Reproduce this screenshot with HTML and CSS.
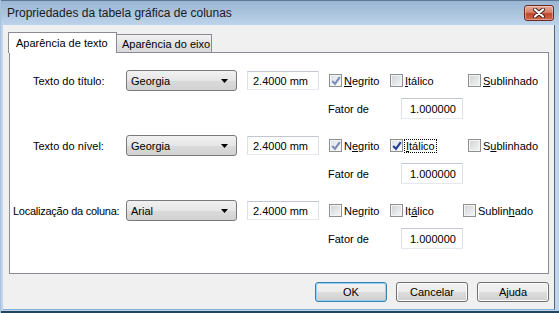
FILE: index.html
```html
<!DOCTYPE html>
<html lang="pt">
<head>
    <meta charset="UTF-8">
    <title>Propriedades da tabela gráfica de colunas</title>
    <link rel="stylesheet" href="styles.css">
</head>
<body>
    <div class="window">
        <div class="titlebar">
            <span class="title">Propriedades da tabela gráfica de colunas</span>
            <button class="close-btn">
                <svg width="14" height="10" viewBox="0 0 14 10">
                    <path d="M3 1.5 L11 8.5 M11 1.5 L3 8.5" stroke="#3b2320" stroke-width="4" stroke-linecap="round"/>
                    <path d="M3 1.5 L11 8.5 M11 1.5 L3 8.5" stroke="#ffffff" stroke-width="2.2" stroke-linecap="round"/>
                </svg>
            </button>
        </div>

        <div class="client">
            <div class="tabs">
                <div class="tab active">Aparência de texto</div>
                <div class="tab">Aparência do eixo</div>
            </div>

            <div class="panel">
                <!-- Texto do título -->
                <div class="group">
                    <div class="row">
                        <label class="field-label">Texto do título:</label>
                        <div class="combo">
                            <span>Georgia</span>
                            <svg class="arrow" width="7" height="4" viewBox="0 0 7 4"><path d="M0 0 H7 L3.5 4 Z" fill="#000"/></svg>
                        </div>
                        <div class="textbox size-box">2.4000 mm</div>
                        <div class="checks">
                            <span class="check check-bold"><span class="cb checked"><svg width="10" height="10" viewBox="0 0 10 10"><path d="M1.2 5 L4 7.8 L8.8 1.2" fill="none" stroke="#7d8fb8" stroke-width="2.2"/></svg></span><span class="check-text"><u>N</u>egrito</span></span>
                            <span class="check check-italic"><span class="cb"></span><span class="check-text"><u>I</u>tálico</span></span>
                            <span class="check"><span class="cb"></span><span class="check-text"><u>S</u>ublinhado</span></span>
                        </div>
                    </div>
                    <div class="row factor-row">
                        <span class="factor-label">Fator de</span>
                        <div class="textbox factor-box">1.000000</div>
                    </div>
                </div>

                <!-- Texto do nível -->
                <div class="group">
                    <div class="row">
                        <label class="field-label">Texto do nível:</label>
                        <div class="combo">
                            <span>Georgia</span>
                            <svg class="arrow" width="7" height="4" viewBox="0 0 7 4"><path d="M0 0 H7 L3.5 4 Z" fill="#000"/></svg>
                        </div>
                        <div class="textbox size-box">2.4000 mm</div>
                        <div class="checks">
                            <span class="check check-bold"><span class="cb checked"><svg width="10" height="10" viewBox="0 0 10 10"><path d="M1.2 5 L4 7.8 L8.8 1.2" fill="none" stroke="#7d8fb8" stroke-width="2.2"/></svg></span><span class="check-text">N<u>e</u>grito</span></span>
                            <span class="check check-italic"><span class="cb checked"><svg width="10" height="10" viewBox="0 0 10 10"><path d="M1.2 5 L4 7.8 L8.8 1.2" fill="none" stroke="#21409a" stroke-width="2.2"/></svg></span><span class="check-text focus"><u>I</u>tálico</span></span>
                            <span class="check"><span class="cb"></span><span class="check-text">S<u>u</u>blinhado</span></span>
                        </div>
                    </div>
                    <div class="row factor-row">
                        <span class="factor-label">Fator de</span>
                        <div class="textbox factor-box">1.000000</div>
                    </div>
                </div>

                <!-- Localização da coluna -->
                <div class="group">
                    <div class="row">
                        <label class="field-label wide">Localização da coluna:</label>
                        <div class="combo">
                            <span>Arial</span>
                            <svg class="arrow" width="7" height="4" viewBox="0 0 7 4"><path d="M0 0 H7 L3.5 4 Z" fill="#000"/></svg>
                        </div>
                        <div class="textbox size-box">2.4000 mm</div>
                        <div class="checks">
                            <span class="check check-bold"><span class="cb"></span><span class="check-text">Ne<u>g</u>rito</span></span>
                            <span class="check check-italic short"><span class="cb"></span><span class="check-text">It<u>á</u>lico</span></span>
                            <span class="check"><span class="cb"></span><span class="check-text">Sublin<u>h</u>ado</span></span>
                        </div>
                    </div>
                    <div class="row factor-row">
                        <span class="factor-label">Fator de</span>
                        <div class="textbox factor-box">1.000000</div>
                    </div>
                </div>
            </div>

            <div class="buttons">
                <button class="btn default">OK</button>
                <button class="btn">Cancelar</button>
                <button class="btn">Ajuda</button>
            </div>
        </div>
    </div>
</body>
</html>
```

FILE: styles.css
```css
* {
    margin: 0;
    padding: 0;
    box-sizing: border-box;
}

body {
    width: 559px;
    height: 313px;
    overflow: hidden;
    font-family: 'Liberation Sans', Arial, sans-serif;
    font-size: 11px;
    color: #000;
    background: #bcd2e9;
}

.window {
    height: 313px;
    display: flex;
    flex-direction: column;
    background: #c0d5eb;
    border-left: 1px solid #a7c2dd;
    box-shadow: inset 0 -2px 0 #22455f;
}

/* Barre de titre */
.titlebar {
    height: 25px;
    flex: none;
    display: flex;
    align-items: center;
    justify-content: space-between;
    padding: 0 5px 0 6px;
    background: linear-gradient(#9ab6d3, #abc4de 50%, #bcd3ea);
    border-top: 1px solid #5b7896;
}

.title {
    font-size: 12px;
    color: #1a1a1a;
}

.close-btn {
    width: 30px;
    height: 16px;
    display: flex;
    align-items: center;
    justify-content: center;
    border: 1px solid #6b2a22;
    border-radius: 3px;
    background: linear-gradient(#e7aa9c, #d8806b 45%, #c2452c 55%, #d0694f);
    box-shadow: inset 0 0 0 1px rgba(255,255,255,0.35);
}

/* Zone client */
.client {
    flex: 1;
    margin: 0 4px 3px 2px;
    padding: 7px 5px 0 6px;
    background: #f0f0f0;
    border-right: 1px solid #53687e;
    border-bottom: 1px solid #7fb0d6;
}

.tabs {
    display: flex;
    align-items: flex-end;
    height: 20px;
    margin-left: -1px;
    position: relative;
    z-index: 1;
}

.tab {
    height: 18px;
    width: 96px;
    display: flex;
    align-items: center;
    padding-left: 5px;
    border: 1px solid #898c95;
    border-bottom: none;
    background: linear-gradient(#f2f2f2, #e4e4e4 50%, #d9d9d9);
    font-size: 11px;
}

.tab.active {
    width: 109px;
    height: 21px;
    margin-bottom: -1px;
    padding-left: 7px;
    background: #fff;
    position: relative;
    z-index: 2;
}

.tab + .tab {
    margin-left: -1px;
}

.panel {
    height: 222px;
    background: #fff;
    border: 1px solid #898c95;
    padding-top: 17px;
}

.group {
    display: flex;
    flex-direction: column;
    gap: 7px;
    margin-bottom: 16px;
}

.row {
    display: flex;
    align-items: center;
    height: 21px;
}

.field-label {
    width: 116px;
    padding-left: 23px;
}

.field-label.wide {
    padding-left: 3px;
    letter-spacing: -0.25px;
}

.combo {
    width: 111px;
    height: 21px;
    display: flex;
    align-items: center;
    justify-content: space-between;
    padding: 1px 8px 0 4px;
    border: 1px solid #7a7a7a;
    border-radius: 3px;
    background: linear-gradient(#f1f1f1, #e6e6e6 50%, #dadada 51%, #d2d2d2);
}

.textbox {
    display: flex;
    align-items: center;
    border: 1px solid;
    border-color: #c2c7cf #dde2e8 #e3e9ef #dde2e8;
    background: #fff;
}

.size-box {
    width: 72px;
    height: 19px;
    margin-left: 10px;
    padding-left: 5px;
}

.checks {
    display: flex;
    align-items: center;
    margin-left: 10px;
}

.check {
    display: flex;
    align-items: center;
    gap: 2px;
}

.check-bold {
    width: 61px;
}

.check-italic {
    width: 78px;
}

.check-italic.short {
    width: 73px;
}

.cb {
    width: 13px;
    height: 13px;
    display: flex;
    align-items: center;
    justify-content: center;
    border: 1px solid #8e8f8f;
    background: linear-gradient(135deg, #cfd1d4, #f7f7f7);
    box-shadow: inset 0 0 0 1px #f4f4f4;
}

.cb.checked {
    background: linear-gradient(135deg, #dde1e8, #fbfbfb);
}

.focus {
    outline: 1px dotted #000;
    padding: 0 1px;
}

u {
    text-decoration-thickness: 1px;
    text-underline-offset: 1px;
}

.factor-row {
    padding-left: 318px;
}

.factor-label {
    width: 73px;
}

.factor-box {
    width: 62px;
    height: 21px;
    padding-left: 8px;
}

/* Boutons */
.buttons {
    display: flex;
    justify-content: flex-end;
    gap: 9px;
    padding-top: 8px;
}

.btn {
    width: 72px;
    height: 20px;
    font-family: 'Liberation Sans', Arial, sans-serif;
    font-size: 11px;
    color: #000;
    border: 1px solid #707070;
    border-radius: 3px;
    background: linear-gradient(#f2f2f2, #ebebeb 50%, #dddddd 51%, #cfcfcf);
    box-shadow: inset 0 0 0 1px #fcfcfc;
}

.btn.default {
    border-color: #3c7fb1;
    box-shadow: inset 0 0 0 1px #8fd3f5;
}
```
